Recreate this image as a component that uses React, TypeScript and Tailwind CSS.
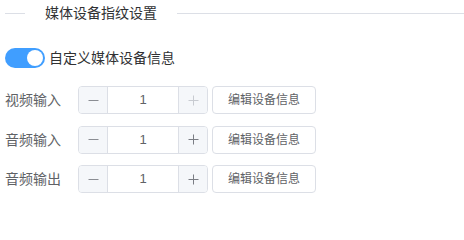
import React from "react";

const font = { fontFamily: '"Liberation Sans", "Noto Sans CJK SC", sans-serif' };

function Minus({ color }: { color: string }) {
  return (
    <svg width="11" height="11" viewBox="0 0 11 11">
      <line x1="0.5" y1="5.5" x2="10.5" y2="5.5" stroke={color} strokeWidth="1" />
    </svg>
  );
}

function Plus({ color }: { color: string }) {
  return (
    <svg width="11" height="11" viewBox="0 0 11 11">
      <line x1="0.5" y1="5.5" x2="10.5" y2="5.5" stroke={color} strokeWidth="1" />
      <line x1="5.5" y1="0.5" x2="5.5" y2="10.5" stroke={color} strokeWidth="1" />
    </svg>
  );
}

function Row({ label, plusDisabled }: { label: string; plusDisabled?: boolean }) {
  return (
    <div className="flex items-center h-[28px]">
      <div className="w-[73px] text-[14px] text-[#606266] leading-[28px]">{label}</div>
      <div className="flex w-[130px] h-[28px] border border-[#dcdfe6] rounded-[4px] bg-white overflow-hidden">
        <div className="w-[29px] h-full bg-[#f5f7fa] border-r border-[#dcdfe6] flex items-center justify-center">
          <Minus color="#8a8d93" />
        </div>
        <div className="flex-1 flex items-center justify-center text-[13px] text-[#606266]">1</div>
        <div className="w-[29px] h-full bg-[#f5f7fa] border-l border-[#dcdfe6] flex items-center justify-center">
          <Plus color={plusDisabled ? "#c8cbd1" : "#7a7d84"} />
        </div>
      </div>
      <button className="ml-[4px] w-[104px] h-[28px] border border-[#dcdfe6] rounded-[4px] bg-white text-[12px] text-[#606266] flex items-center justify-center">
        编辑设备信息
      </button>
    </div>
  );
}

export default function App() {
  return (
    <div className="w-[464px] h-[214px] bg-white pl-[5px] overflow-hidden" style={font}>
      <div className="flex items-center h-[26px]">
        <div className="w-[20px] h-px bg-[#dcdfe6]" />
        <div className="px-[20px] text-[14px] text-[#303133] leading-[26px]">媒体设备指纹设置</div>
        <div className="flex-1 h-px bg-[#dcdfe6]" />
      </div>
      <div className="mt-[22px] flex items-center h-[20px]">
        <div className="relative w-[40px] h-[20px] rounded-full bg-[#409eff]">
          <div className="absolute right-[2px] top-[2px] w-[16px] h-[16px] rounded-full bg-white" />
        </div>
        <span className="ml-[4px] text-[14px] text-[#303133]">自定义媒体设备信息</span>
      </div>
      <div className="mt-[18px] flex flex-col gap-[11.5px]">
        <Row label="视频输入" plusDisabled />
        <Row label="音频输入" />
        <Row label="音频输出" />
      </div>
    </div>
  );
}
